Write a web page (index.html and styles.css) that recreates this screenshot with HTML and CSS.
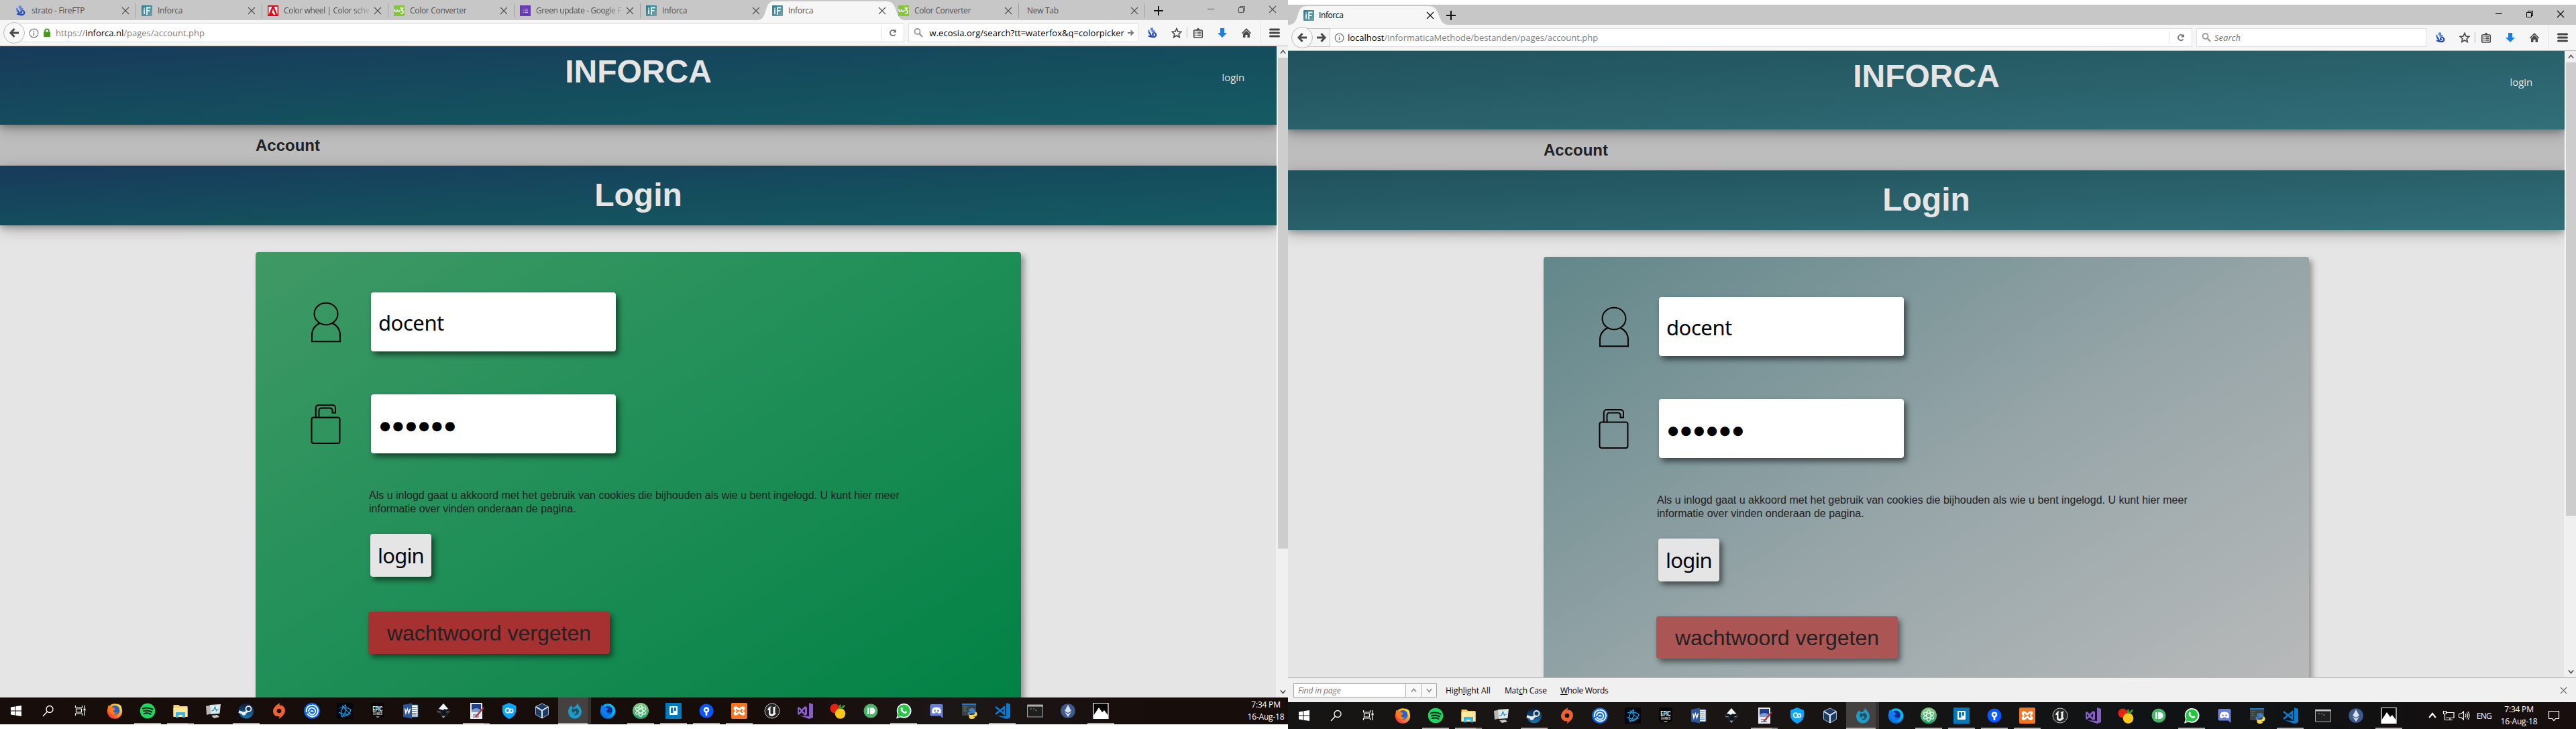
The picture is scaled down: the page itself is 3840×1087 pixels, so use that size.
FILE: index.html
```html
<!DOCTYPE html>
<html lang="nl">
<head>
<meta charset="utf-8">
<title>Inforca</title>
<link rel="stylesheet" href="styles.css">
</head>
<body>
<svg class="defs" width="0" height="0" aria-hidden="true">
<defs>
<linearGradient id="g-ff" x1="1" y1="0" x2="0" y2="1"><stop offset="0" stop-color="#fff44f"/><stop offset=".45" stop-color="#ff9a1f"/><stop offset="1" stop-color="#e8134f"/></linearGradient>
<linearGradient id="g-steam" x1="0" y1="0" x2="0" y2="1"><stop offset="0" stop-color="#0b1a3a"/><stop offset="1" stop-color="#1b75ae"/></linearGradient>
<linearGradient id="g-wf" x1="1" y1="0" x2="0" y2="1"><stop offset="0" stop-color="#00e5ff"/><stop offset="1" stop-color="#0a50d8"/></linearGradient>
<linearGradient id="g-inf" x1="0" y1="0" x2="1" y2="1"><stop offset="0" stop-color="#1f7f93"/><stop offset="1" stop-color="#7e9ea6"/></linearGradient>
<linearGradient id="g-atom" x1="0" y1="0" x2="0" y2="1"><stop offset="0" stop-color="#8fce8a"/><stop offset="1" stop-color="#1fa06a"/></linearGradient>
</defs>
<symbol id="close" viewBox="0 0 12 12"><path d="M1 1l10 10M11 1L1 11" fill="none" stroke="currentColor" stroke-width="1.1"/></symbol>
<symbol id="plus" viewBox="0 0 16 16"><path d="M8 1v14M1 8h14" stroke="#111" stroke-width="2" fill="none"/></symbol>
<symbol id="min" viewBox="0 0 12 12"><path d="M1 5.500h10" stroke="currentColor" fill="none"/></symbol>
<symbol id="restore" viewBox="0 0 12 12"><path d="M1.500 3.500h7v7h-7zM3.500 3.500v-2h7v7h-2" stroke="currentColor" fill="none"/></symbol>
<symbol id="tabshape" viewBox="0 0 218 28" preserveAspectRatio="none"><path d="M0 28C9 27 10 18 13 9C15 3 18 0 25 0H191C198 0 202 3 204 9C208 18 209 27 218 28z" fill="#f6f6f6"/></symbol>
<symbol id="f-inforca" viewBox="0 0 16 16"><rect width="16" height="16" rx="1" fill="url(#g-inf)"/><path d="M4 3.500v1.500M4 6v7" stroke="#e6f2f4" stroke-width="1.800"/><path d="M8 14V3.500h5.500M8 8h4.500" fill="none" stroke="#e6f2f4" stroke-width="1.800"/></symbol>
<symbol id="f-ftp" viewBox="0 0 16 16"><circle cx="7" cy="2.500" r="2.300" fill="#5a86e0"/><path d="M3 4c-1.500 2-.5 4 1.500 4.500M6.500 5.500h5" fill="none" stroke="#4a7be0" stroke-width="2.400"/><path d="M3 8c2 1 2 5 5 6c4 1 6-2 5-4.500c-1-2-4.500-2-5 0c-.3 1.500 1 2 2 1.500M2 12.500l5 1.500" fill="none" stroke="#2549b4" stroke-width="2.200"/></symbol>
<symbol id="f-adobe" viewBox="0 0 16 16"><rect width="16" height="16" fill="#e1081c"/><path d="M6.500 2L1.500 14V2zM9.500 2h5v12zM8 5.500L11.500 14H9l-1-2.500H6z" fill="#fff"/></symbol>
<symbol id="f-w3" viewBox="0 0 16 16"><rect width="16" height="16" fill="#87c540"/><path d="M1 6q0 3 2 3t2-3q0 3 2 3t2-2M9.500 4h4l-2 3q3 .3 2.500 3t-4 2" fill="none" stroke="#fff" stroke-width="1.500"/></symbol>
<symbol id="f-forms" viewBox="0 0 16 16"><rect width="16" height="16" fill="#673ab7"/><path d="M7 5.500h5M7 8h5M7 10.500h5M4.500 5.500h1M4.500 8h1M4.500 10.500h1" stroke="#d8cbee"/></symbol>
<symbol id="arrow" viewBox="0 0 16 16"><path d="M8.500 2L3 8l5.500 6M3.500 8H15" fill="none" stroke="#4a4a4a" stroke-width="3"/></symbol>
<symbol id="info" viewBox="0 0 16 16"><circle cx="8" cy="8" r="6.800" fill="none" stroke="#777" stroke-width="1.200"/><path d="M8 7v4.500M8 4v1.600" stroke="#666" stroke-width="1.500"/></symbol>
<symbol id="padlock" viewBox="0 0 10 14"><rect y="5.500" width="10" height="7.500" rx="1" fill="#4a9a22"/><path d="M2 7V4.500a3 3 0 0 1 6 0V7" fill="none" stroke="#4a9a22" stroke-width="1.800"/></symbol>
<symbol id="reload" viewBox="0 0 12 12"><path d="M9.500 8.500A4.200 4.200 0 1 1 9 3" fill="none" stroke="#777" stroke-width="1.800"/><path d="M11 .5v5H6z" fill="#777"/></symbol>
<symbol id="glass" viewBox="0 0 14 14"><circle cx="5.500" cy="5" r="4" fill="none" stroke="#999" stroke-width="1.800"/><path d="M8.500 8l4.500 5" stroke="#999" stroke-width="2.400"/></symbol>
<symbol id="go" viewBox="0 0 12 12"><path d="M1 6h8M6 2l4 4-4 4" fill="none" stroke="#777" stroke-width="2"/></symbol>
<symbol id="star" viewBox="0 0 16 16"><path d="M8 1.500l2 4.500 4.700.5-3.500 3.200 1 4.800L8 12l-4.200 2.500 1-4.800L1.300 6.500 6 6z" fill="none" stroke="#4a4a4a" stroke-width="1.700"/></symbol>
<symbol id="clip" viewBox="0 0 16 16"><rect x="1.800" y="4" width="12.400" height="11" rx="1" fill="none" stroke="#4a4a4a" stroke-width="1.700"/><path d="M4 4l2-1.500L8 .5l2 2L12 4z" fill="#4a4a4a"/><path d="M4 7h1.500M7 7h5M4 9.500h1.500M7 9.500h5M4 12h1.500M7 12h5" stroke="#4a4a4a" stroke-width="1.300"/></symbol>
<symbol id="down" viewBox="0 0 16 16"><path d="M5 1h6v7h4l-7 7-7-7h4z" fill="#1a7fe6"/></symbol>
<symbol id="home" viewBox="0 0 16 16"><path d="M8 1L.7 8.500l1.300 1L8 3.500l6 6 1.300-1z" fill="#4a4a4a"/><path d="M3 9.500l5-5 5 5V15H9.500v-4h-3v4H3z" fill="#4a4a4a"/></symbol>
<symbol id="menu" viewBox="0 0 16 14"><path d="M1.500 2h13M1.500 7h13M1.500 12h13" stroke="#444" stroke-width="3" stroke-linecap="round"/></symbol>
<symbol id="chev-up" viewBox="0 0 10 10"><path d="M1 7.500L5 2.500l4 5" fill="none" stroke="currentColor" stroke-width="1.700"/></symbol>
<symbol id="chev-down" viewBox="0 0 10 10"><path d="M1 2.500l4 5 4-5" fill="none" stroke="currentColor" stroke-width="1.700"/></symbol>
<symbol id="user" viewBox="0 0 46 62"><g fill="none" stroke="#000" stroke-width="2"><ellipse cx="23" cy="18" rx="17.500" ry="16.200"/><path d="M13.500 32C5 36 2 43 2 50V59.300H44V50C44 43 41 36 32.500 32"/></g></symbol>
<symbol id="lock" viewBox="0 0 46 62"><g fill="none" stroke="#000" stroke-width="2"><rect x="1.500" y="20.500" width="42" height="38.500" rx="3"/><path d="M7.800 20V6a4 4 0 0 1 4-4H33a4 4 0 0 1 4 4V13.500H32.500V10a3.500 3.500 0 0 0-3.500-3.500H16a3.500 3.500 0 0 0-3.500 3.500V20"/></g></symbol>
<symbol id="t-win" viewBox="0 0 24 24"><path d="M4 6.500l6.500-1v6H4zM11.500 5.300L20 4v7.500h-8.500zM4 12.500h6.500v6L4 17.600zM11.500 12.500H20V20l-8.500-1.300z" fill="#fff"/></symbol>
<symbol id="t-search" viewBox="0 0 24 24"><circle cx="14" cy="9.500" r="5" fill="none" stroke="#fff" stroke-width="1.300"/><path d="M10.500 13L4 20" stroke="#fff" stroke-width="1.400"/></symbol>
<symbol id="t-view" viewBox="0 0 24 24"><path d="M4.500 4v3h10V4M4.500 19v-3h10v3M5.500 9h8v5h-8zM18 4v4M18 12v7" fill="none" stroke="#fff" stroke-width="1.200"/><path d="M16.500 8.500h3v3h-3z" fill="#fff"/></symbol>
<symbol id="t-ff" viewBox="0 0 24 24"><circle cx="12" cy="12.500" r="11.200" fill="url(#g-ff)"/><circle cx="12.500" cy="11" r="7" fill="#2463d4"/><path d="M2 4c3 1 5 2 8 3c2 1 3 2 3 3c-2 0-3 1-3 3c2 3 5 2 6 0c-1 6-9 6-12 1C2 11 1.500 8 2 4z" fill="#ff7a1a"/><path d="M15 0c3 2 5 6 4.500 11c3-2 3-5 1.500-7z" fill="#ffe23b"/></symbol>
<symbol id="t-spot" viewBox="0 0 24 24"><circle cx="12" cy="12" r="11.300" fill="#1ed760"/><path d="M5 8.500q8-2.500 14.500 1.200M6 12.300q7-2 12 1.200M6.800 16q5.500-1.500 9.700.9" fill="none" stroke="#14241a" stroke-width="2.200" stroke-linecap="round"/></symbol>
<symbol id="t-files" viewBox="0 0 24 24"><path d="M1.500 3h8l1.500 2h11.500v16h-21z" fill="#f3cf6b"/><path d="M1.500 7h21v13.500h-21z" fill="#ffe9a0"/><path d="M5 14h14v8h-4v-4H9v4H5z" fill="#3cb4e8"/></symbol>
<symbol id="t-mon" viewBox="0 0 24 24"><path d="M1 5l9-2v13l-8 2z" fill="#b9b9b4"/><path d="M7 3l16-1-1.500 14L8 17z" fill="#dfe0dc"/><path d="M9 5l12-.7-1 10L10 15z" fill="#d8f0fa"/><path d="M9.500 12l3-1 2-5 2 6 1-2h2.500" fill="none" stroke="#2a86b8" stroke-width="1.200"/><path d="M9 19l9-1 3 3-8 2z" fill="#c9c9c4"/></symbol>
<symbol id="t-steam" viewBox="0 0 24 24"><circle cx="12" cy="12" r="11.200" fill="url(#g-steam)"/><circle cx="15.500" cy="9" r="4" fill="none" stroke="#e8eef4" stroke-width="1.800"/><path d="M1 13l8 3 5-4" fill="none" stroke="#e8eef4" stroke-width="3.500"/><circle cx="8.500" cy="16" r="2.800" fill="#e8eef4"/></symbol>
<symbol id="t-origin" viewBox="0 0 24 24"><path d="M14 0c-1 1.500-1.500 2-1.500 3.500C18 3.500 21 7 21 11.500c0 5-4 9-9.500 12.500c1-1.500 1-2.500 1-3.500C6 20.500 3 17 3 12.500C3 8 7 3 14 0z" fill="#ed6233"/><circle cx="12" cy="12" r="3.300" fill="#1a0e0b"/></symbol>
<symbol id="t-uplay" viewBox="0 0 24 24"><circle cx="12" cy="12" r="11.800" fill="#0c6cf2"/><path d="M4 14C2.500 7 8 3.500 12 3.500a8.500 8.500 0 1 1-7 12.500M7 13c0-4 3-6 5.500-5.500a5 5 0 1 1-5 6.500M10.500 13.500c0-2 3-2 3.200 0" fill="none" stroke="#fff" stroke-width="1.900"/></symbol>
<symbol id="t-bnet" viewBox="0 0 24 24"><rect width="24" height="24" rx="1.500" fill="#02060c"/><g fill="none" stroke="#159fe8" stroke-width="1.300"><path d="M8 4q4 6 12 12q-9 3-17-2"/><path d="M4 8q9-3 17 2q-2 9-11 10"/><path d="M13 3q3 9-5 18q-5-9 5-18z"/></g></symbol>
<symbol id="t-epic" viewBox="0 0 24 24"><path d="M2 0h20v20l-10 4L2 20z" fill="#050505"/><text x="12" y="12.500" text-anchor="middle" textLength="15" lengthAdjust="spacingAndGlyphs" class="epic-a">EPIC</text><text x="12" y="18" text-anchor="middle" textLength="14" lengthAdjust="spacingAndGlyphs" class="epic-b">GAMES</text><path d="M8.500 20.500h7L12 22z" fill="#ddd"/></symbol>
<symbol id="t-word" viewBox="0 0 24 24"><path d="M11 3h12v18H11z" fill="#fff" stroke="#2b579a"/><path d="M14 6.500h7M14 9.500h7M14 12.500h7M14 15.500h7M14 18h7" stroke="#2b579a" stroke-width="1.200"/><path d="M1 3l13-2.500v23L1 21z" fill="#2b579a"/><path d="M3.500 8.500l1.500 7 2.300-6.500 2.200 6.500 2-7" fill="none" stroke="#fff" stroke-width="1.500"/></symbol>
<symbol id="t-ink" viewBox="0 0 24 24"><path d="M12 1l10 11c0 2-2 3-5 3c2 1 3 2 0 3l-5 4-4-4c2-1 1-2-1-3c-3 0-5-1-5-3z" fill="#11151c" stroke="#4a5260" stroke-width=".6"/><path d="M12 1l7 8-3 1-2-1-3 2-2-1-4-1z" fill="#f2f5f8"/><path d="M10 20h4l-2 2.500zM3 13l5 1M16 14l4-1" stroke="#8a96a6" fill="#8a96a6"/></symbol>
<symbol id="t-paint" viewBox="0 0 24 24"><path d="M3 0h18v24H3z" fill="#e8ecf0"/><path d="M5 2h14v12H5z" fill="#1f3f8c"/><path d="M5 11q7-6 14 0v3H5z" fill="#7f9ed0"/><path d="M7 18h9M7 21h9" stroke="#2b4fa0"/><path d="M23 7L11 21" stroke="#c82b2b" stroke-width="2.200"/></symbol>
<symbol id="t-shield" viewBox="0 0 24 24"><path d="M12 0l10 4v9q-1 7-10 11Q3 20 2 13V4z" fill="#0aa5ff"/><circle cx="9.800" cy="11.500" r="3.300" fill="none" stroke="#fff" stroke-width="1.700"/><circle cx="15" cy="12" r="2.600" fill="none" stroke="#fff" stroke-width="1.700"/></symbol>
<symbol id="t-vbox" viewBox="0 0 24 24"><path d="M12 1l9.500 4.500v12L12 23l-9.500-5.500v-12z" fill="#1c3a66" stroke="#a8b8cc" stroke-width="1"/><path d="M12 11.500V23M12 11.500L3 6M12 11.500L21 6" stroke="#e5ecf5" stroke-width="2"/></symbol>
<symbol id="t-water" viewBox="0 0 24 24"><path d="M16 0c0 4 6 7 6 13a10 10 0 0 1-20 1C2 9 4 6 7 4c1 3 2 3 3 3c3-1 5-4 6-7z" fill="#1f9bc8"/><path d="M8 8q3 2 6 0c4 1 5 5 3 8s-6 3-7 1c3 0 5-2 4-4c-2-1-3 0-4 2c-3-1-3-4-2-7z" fill="#24505f"/></symbol>
<symbol id="t-ffdev" viewBox="0 0 24 24"><circle cx="12" cy="12.500" r="11.200" fill="url(#g-wf)"/><circle cx="12.500" cy="11" r="6.500" fill="#0b2a8c"/><path d="M2 4c3 1 5 2 8 3c2 1 3 2 3 3c-2 0-3 1-3 3c2 3 5 2 6 0c-1 6-9 6-12 1C2 11 1.500 8 2 4z" fill="#0f7df5"/></symbol>
<symbol id="t-atom" viewBox="0 0 24 24"><circle cx="12" cy="12" r="12" fill="url(#g-atom)"/><g fill="none" stroke="#e9f8ec" stroke-width="1.100"><ellipse cx="12" cy="12" rx="3" ry="8.500"/><ellipse cx="12" cy="12" rx="3" ry="8.500" transform="rotate(60 12 12)"/><ellipse cx="12" cy="12" rx="3" ry="8.500" transform="rotate(120 12 12)"/></g></symbol>
<symbol id="t-trello" viewBox="0 0 24 24"><path d="M0 0h24v24H0z" fill="#0079bf"/><rect x="6" y="5" width="12" height="13" rx="1" fill="#fff"/><path d="M8 7h3.500v8H8zM13 7h3v5h-3z" fill="#0079bf"/></symbol>
<symbol id="t-tree" viewBox="0 0 24 24"><circle cx="12" cy="12" r="10.500" fill="#0a57ff"/><circle cx="12" cy="10.500" r="4.300" fill="#fff"/><circle cx="12" cy="10.500" r="1.700" fill="#0a57ff"/><path d="M12 14v5" stroke="#fff" stroke-width="2.600"/></symbol>
<symbol id="t-xampp" viewBox="0 0 24 24"><rect width="24" height="24" rx="2" fill="#f37623"/><path d="M4.500 6c3-2 5 0 7.500 2.500C14.500 6 17 4 19.500 6c2 3 0 5-2 6c2 1 4 3 2 6c-2.500 2-5 0-7.500-2.500C9.500 18 7 20 4.500 18c-2-3 0-5 2-6c-2-1-4-3-2-6z" fill="#fff"/><path d="M8 9q0 3 3.500 3Q8 12 8 15M16 9q0 3-3.500 3q3.500 0 3.500 3" fill="none" stroke="#f37623" stroke-width="2"/></symbol>
<symbol id="t-unreal" viewBox="0 0 24 24"><circle cx="12" cy="12" r="11" fill="#262626" stroke="#c4c4c4"/><path d="M5 11q1-5 6-6q-2 2-1.500 4v7l2 1 2-1V8l-1-1q3-1 5-2q-1 2-1 4v6l1.500 1q-3 3-6 4q-4 0-5-3v-6q-1 0-2 0z" fill="#f0f0f0"/></symbol>
<symbol id="t-vs" viewBox="0 0 24 24"><path d="M18 0l6 2v20l-6 2-14-5 14 1z" fill="#865fc5"/><path d="M1 7l2-1 4 3.500L12 5l3 1.500v11L12 19l-5-4.500L3 18l-2-1zM3 9.500v5L5.500 12zM12 9l-3.500 3 3.500 3z" fill="#865fc5" fill-rule="evenodd"/></symbol>
<symbol id="t-fruit" viewBox="0 0 24 24"><circle cx="7.500" cy="8.500" r="7" fill="#e32414"/><circle cx="15.500" cy="16" r="7.800" fill="#fdc81a"/><path d="M14 9q-1-6 2-7q1 3 1 5q2-4 6-4q-1 5-6 6z" fill="#2aa32a"/></symbol>
<symbol id="t-push" viewBox="0 0 24 24"><circle cx="12" cy="12" r="10.500" fill="#4cb36b"/><rect x="7" y="7" width="2.600" height="10" rx=".8" fill="#fff"/><path d="M11 7h2.500a5 5 0 0 1 0 10H11z" fill="#fff"/></symbol>
<symbol id="t-wa" viewBox="0 0 24 24"><path d="M1 23.500l2-6.500A10.900 10.900 0 1 1 7.500 21.500z" fill="#fff"/><circle cx="12.300" cy="11.700" r="9.200" fill="#25c544"/><path d="M2.800 21.800L5 15l4 4z" fill="#25c544"/><path d="M8.500 7q1.500-1.500 2.500 1.500q-1 1.500-.5 2q1 2 3 3l1.500-1.300q3 .8 2 2.300q-2 2.500-5.500 0.500t-4-5q0-2 1-3z" fill="#fff"/></symbol>
<symbol id="t-discord" viewBox="0 0 24 24"><path d="M4.500 2h15a2 2 0 0 1 2 2v19l-4-3.500h-13a2 2 0 0 1-2-2V4a2 2 0 0 1 2-2z" fill="#6a7fd6"/><path d="M7 7.500q5-2 10 0q2.500 4 2 7q-2 1.500-4 1.500l-1-1.500h-4L9 16q-2 0-4-1.500q-.5-3 2-7z" fill="#fff"/><circle cx="9.500" cy="11.800" r="1.400" fill="#6a7fd6"/><circle cx="14.500" cy="11.800" r="1.400" fill="#6a7fd6"/></symbol>
<symbol id="t-py" viewBox="0 0 24 24"><path d="M1 1h21v18H1z" fill="#3b4144"/><path d="M1 1h21v2H1z" fill="#1e7fd0"/><path d="M3 6h6M3 9h4M3 12h5" stroke="#5b8a5b"/><path d="M11 12q0-4 5-4t4.500 4v3.500h-6q-2 .5-2 3h-2q-2.500-4 .5-5h5" fill="#3f7fc0"/><path d="M21 13q3 1 2.500 4.500t-4 3h-2l3 1q-1 2.500-5 2.500t-4-3v-3h6q3-.5 3.500-5z" fill="#ffd84a"/></symbol>
<symbol id="t-code" viewBox="0 0 24 24"><path d="M18 0l6 2v20l-6 2-14-5 14 1z" fill="#0b7bd0"/><path d="M2 6l13 10.500V6.500L2 17" fill="none" stroke="#0b7bd0" stroke-width="2.600"/></symbol>
<symbol id="t-cmd" viewBox="0 0 24 24"><path d="M.5 3h23v18H.5z" fill="#1f1f1f" stroke="#a8a8a8"/><path d="M1 3.500h22v2H1z" fill="#c8c8c8"/><path d="M4 9h3M9 9h2M12 11h3" stroke="#888"/></symbol>
<symbol id="t-eth" viewBox="0 0 24 24"><circle cx="12" cy="12" r="10.800" fill="#3d5a8a"/><path d="M12 3l5 9-5 3-5-3z" fill="#d8e2f0"/><path d="M12 16.500l5-3-5 7.500-5-7.500z" fill="#d8e2f0"/></symbol>
<symbol id="t-pic" viewBox="0 0 24 24"><path d="M1 .5h22v23H1z" fill="#050505" stroke="#fff" stroke-width="1.200"/><path d="M1 19l8-12 5 7 3-3 6 8v4.500H1z" fill="#fff"/></symbol>
<symbol id="net" viewBox="0 0 18 18"><path d="M5 4.500h12v8H5M11 12.500v3M7 15.500h8M1.500 2.500h4v4h-4zM3.500 6.500v9h3" fill="none" stroke="#fff" stroke-width="1.200"/></symbol>
<symbol id="vol" viewBox="0 0 18 18"><path d="M1.500 6.500h3l4-3.500v12l-4-3.500h-3zM11 6.500q2 2.500 0 5M13 4.500q3.500 4.500 0 9M15 3q4 6 0 12" fill="none" stroke="#fff" stroke-width="1.100"/></symbol>
<symbol id="note" viewBox="0 0 18 18"><path d="M1.500 2.500h15v11h-5l-2.500 3-2.500-3h-5z" fill="none" stroke="#fff" stroke-width="1.200"/></symbol>
</svg>

<section class="window online">
  <div class="tabbar">
    <div class="tab"><svg class="fav"><use href="#f-ftp"/></svg><span class="title">strato - FireFTP</span><svg class="x"><use href="#close"/></svg></div>
    <div class="tab"><svg class="fav"><use href="#f-inforca"/></svg><span class="title">Inforca</span><svg class="x"><use href="#close"/></svg></div>
    <div class="tab"><svg class="fav"><use href="#f-adobe"/></svg><span class="title fade">Color wheel | Color sche</span><svg class="x"><use href="#close"/></svg></div>
    <div class="tab"><svg class="fav"><use href="#f-w3"/></svg><span class="title">Color Converter</span><svg class="x"><use href="#close"/></svg></div>
    <div class="tab"><svg class="fav"><use href="#f-forms"/></svg><span class="title fade">Green update - Google F</span><svg class="x"><use href="#close"/></svg></div>
    <div class="tab last"><svg class="fav"><use href="#f-inforca"/></svg><span class="title">Inforca</span><svg class="x"><use href="#close"/></svg></div>
    <div class="tab active"><svg class="shape"><use href="#tabshape"/></svg><svg class="fav"><use href="#f-inforca"/></svg><span class="title">Inforca</span><svg class="x"><use href="#close"/></svg></div>
    <div class="tab"><svg class="fav"><use href="#f-w3"/></svg><span class="title">Color Converter</span><svg class="x"><use href="#close"/></svg></div>
    <div class="tab blank"><span class="title">New Tab</span><svg class="x"><use href="#close"/></svg></div>
    <svg class="plus"><use href="#plus"/></svg>
    <div class="controls"><svg><use href="#min"/></svg><svg><use href="#restore"/></svg><svg><use href="#close"/></svg></div>
  </div>
  <div class="toolbar">
    <div class="back"><svg><use href="#arrow"/></svg></div>
    <div class="url"><svg class="info"><use href="#info"/></svg><svg class="padlock"><use href="#padlock"/></svg><span class="address">https://<b>inforca.nl</b>/pages/account.php</span><span class="reload"><svg><use href="#reload"/></svg></span></div>
    <div class="search"><svg class="glass"><use href="#glass"/></svg><span class="query"><span>w.ecosia.org/search?tt=waterfox&amp;q=colorpicker</span></span><svg class="go"><use href="#go"/></svg></div>
    <div class="tools"><svg><use href="#f-ftp"/></svg><svg><use href="#star"/></svg><i></i><svg><use href="#clip"/></svg><svg><use href="#down"/></svg><svg><use href="#home"/></svg><i class="pale"></i><svg><use href="#menu"/></svg></div>
  </div>
  <div class="viewport">
    <main class="page">
      <header class="masthead"><h1>INFORCA</h1><a class="loginlink">login</a></header>
      <nav class="crumbs">Account</nav>
      <h2 class="heading">Login</h2>
      <form class="card">
        <div class="row"><svg><use href="#user"/></svg><div class="field">docent</div></div>
        <div class="row"><svg><use href="#lock"/></svg><div class="field dots">●●●●●●</div></div>
        <p>Als u inlogd gaat u akkoord met het gebruik van cookies die bijhouden als wie u bent ingelogd. U kunt hier meer<br>informatie over vinden onderaan de pagina.</p>
        <button type="button" class="submit">login</button>
        <a class="forgot">wachtwoord vergeten</a>
      </form>
    </main>
    <div class="scrollbar"><svg><use href="#chev-up"/></svg><div class="thumb"></div><svg><use href="#chev-down"/></svg></div>
  </div>
  <div class="taskbar">
    <ul class="sys"><li><svg><use href="#t-win"/></svg></li><li><svg><use href="#t-search"/></svg></li><li><svg><use href="#t-view"/></svg></li></ul>
    <ul class="apps">
      <li><svg><use href="#t-ff"/></svg></li><li class="run"><svg><use href="#t-spot"/></svg></li><li class="run multi"><svg><use href="#t-files"/></svg></li><li><svg><use href="#t-mon"/></svg></li><li class="run"><svg><use href="#t-steam"/></svg></li><li><svg><use href="#t-origin"/></svg></li><li><svg><use href="#t-uplay"/></svg></li><li><svg><use href="#t-bnet"/></svg></li><li><svg><use href="#t-epic"/></svg></li><li><svg><use href="#t-word"/></svg></li><li><svg><use href="#t-ink"/></svg></li><li class="run multi"><svg><use href="#t-paint"/></svg></li><li><svg><use href="#t-shield"/></svg></li><li><svg><use href="#t-vbox"/></svg></li><li class="current"><svg><use href="#t-water"/></svg></li><li><svg><use href="#t-ffdev"/></svg></li><li class="run"><svg><use href="#t-atom"/></svg></li><li class="run"><svg><use href="#t-trello"/></svg></li><li class="run"><svg><use href="#t-tree"/></svg></li><li class="run"><svg><use href="#t-xampp"/></svg></li><li><svg><use href="#t-unreal"/></svg></li><li><svg><use href="#t-vs"/></svg></li><li><svg><use href="#t-fruit"/></svg></li><li><svg><use href="#t-push"/></svg></li><li class="run"><svg><use href="#t-wa"/></svg></li><li><svg><use href="#t-discord"/></svg></li><li><svg><use href="#t-py"/></svg></li><li class="run"><svg><use href="#t-code"/></svg></li><li><svg><use href="#t-cmd"/></svg></li><li><svg><use href="#t-eth"/></svg></li><li class="run"><svg><use href="#t-pic"/></svg></li>
    </ul>
    <div class="clock"><span>7:34 PM</span><span>16-Aug-18</span></div>
  </div>
</section>

<section class="window local">
  <div class="tabbar">
    <div class="tab active"><svg class="shape"><use href="#tabshape"/></svg><svg class="fav"><use href="#f-inforca"/></svg><span class="title">Inforca</span><svg class="x"><use href="#close"/></svg></div>
    <svg class="plus"><use href="#plus"/></svg>
    <div class="controls"><svg><use href="#min"/></svg><svg><use href="#restore"/></svg><svg><use href="#close"/></svg></div>
  </div>
  <div class="toolbar">
    <div class="back"><svg><use href="#arrow"/></svg></div>
    <div class="url"><span class="forward"><svg><use href="#arrow"/></svg></span><svg class="info"><use href="#info"/></svg><span class="address"><b>localhost</b>/informaticaMethode/bestanden/pages/account.php</span><span class="reload"><svg><use href="#reload"/></svg></span></div>
    <div class="search"><svg class="glass"><use href="#glass"/></svg><em>Search</em></div>
    <div class="tools"><svg><use href="#f-ftp"/></svg><svg><use href="#star"/></svg><i></i><svg><use href="#clip"/></svg><svg><use href="#down"/></svg><svg><use href="#home"/></svg><i class="pale"></i><svg><use href="#menu"/></svg></div>
  </div>
  <div class="viewport">
    <main class="page">
      <header class="masthead"><h1>INFORCA</h1><a class="loginlink">login</a></header>
      <nav class="crumbs">Account</nav>
      <h2 class="heading">Login</h2>
      <form class="card">
        <div class="row"><svg><use href="#user"/></svg><div class="field">docent</div></div>
        <div class="row"><svg><use href="#lock"/></svg><div class="field dots">●●●●●●</div></div>
        <p>Als u inlogd gaat u akkoord met het gebruik van cookies die bijhouden als wie u bent ingelogd. U kunt hier meer<br>informatie over vinden onderaan de pagina.</p>
        <button type="button" class="submit">login</button>
        <a class="forgot">wachtwoord vergeten</a>
      </form>
    </main>
    <div class="scrollbar"><svg><use href="#chev-up"/></svg><div class="thumb"></div><svg><use href="#chev-down"/></svg></div>
  </div>
  <div class="findbar">
    <div class="find"><em>Find in page</em><span><svg><use href="#chev-up"/></svg></span><span><svg><use href="#chev-down"/></svg></span></div>
    <span class="opt o1">High<u>l</u>ight All</span><span class="opt o2">Mat<u>c</u>h Case</span><span class="opt o3"><u>W</u>hole Words</span>
    <svg class="x"><use href="#close"/></svg>
  </div>
  <div class="taskbar">
    <ul class="sys"><li><svg><use href="#t-win"/></svg></li><li><svg><use href="#t-search"/></svg></li><li><svg><use href="#t-view"/></svg></li></ul>
    <ul class="apps">
      <li><svg><use href="#t-ff"/></svg></li><li class="run"><svg><use href="#t-spot"/></svg></li><li class="run multi"><svg><use href="#t-files"/></svg></li><li><svg><use href="#t-mon"/></svg></li><li class="run"><svg><use href="#t-steam"/></svg></li><li><svg><use href="#t-origin"/></svg></li><li><svg><use href="#t-uplay"/></svg></li><li><svg><use href="#t-bnet"/></svg></li><li><svg><use href="#t-epic"/></svg></li><li><svg><use href="#t-word"/></svg></li><li><svg><use href="#t-ink"/></svg></li><li class="run multi"><svg><use href="#t-paint"/></svg></li><li><svg><use href="#t-shield"/></svg></li><li><svg><use href="#t-vbox"/></svg></li><li class="current"><svg><use href="#t-water"/></svg></li><li><svg><use href="#t-ffdev"/></svg></li><li class="run"><svg><use href="#t-atom"/></svg></li><li class="run"><svg><use href="#t-trello"/></svg></li><li class="run"><svg><use href="#t-tree"/></svg></li><li class="run"><svg><use href="#t-xampp"/></svg></li><li><svg><use href="#t-unreal"/></svg></li><li><svg><use href="#t-vs"/></svg></li><li><svg><use href="#t-fruit"/></svg></li><li><svg><use href="#t-push"/></svg></li><li class="run"><svg><use href="#t-wa"/></svg></li><li><svg><use href="#t-discord"/></svg></li><li><svg><use href="#t-py"/></svg></li><li class="run"><svg><use href="#t-code"/></svg></li><li><svg><use href="#t-cmd"/></svg></li><li><svg><use href="#t-eth"/></svg></li><li class="run"><svg><use href="#t-pic"/></svg></li>
    </ul>
    <div class="tray"><svg class="up"><use href="#chev-up"/></svg><svg><use href="#net"/></svg><svg><use href="#vol"/></svg><span>ENG</span></div>
    <div class="clock"><span>7:34 PM</span><span>16-Aug-18</span></div>
    <svg class="note"><use href="#note"/></svg>
  </div>
</section>
</body>
</html>
```
FILE: styles.css
```css
* { box-sizing: border-box; }
body { margin: 0; display: flex; width: 3840px; height: 1087px; overflow: hidden; background: #fff; font: 12px "Open Sans", "Noto Sans", sans-serif; }
ul { list-style: none; margin: 0; padding: 0; display: flex; }
svg { display: block; flex: none; }
.defs { position: absolute; }
.epic-a { font: bold 11px "Liberation Sans", sans-serif; fill: #fff; }
.epic-b { font: bold 4.500px "Liberation Sans", sans-serif; fill: #ddd; }

.window { display: flex; flex-direction: column; width: 1920px; height: 1080px; flex: none; overflow: hidden; }
.local { margin-top: 7px; }

/* tab strip */
.tabbar { display: flex; align-items: center; height: 30px; flex: none; background: #c7c7c7; padding-left: 15px; color: #505050; }
.tab { position: relative; display: flex; align-items: center; width: 188px; height: 22px; padding-left: 8px; border-right: 1px solid #a3a3a3; margin-top: 2px; }
.tab.last, .tab.active { border-right-color: transparent; }
.tab > * { position: relative; }
.tab .shape { position: absolute; left: -13px; top: -3px; width: 218px; height: 28px; }
.fav { width: 16px; height: 16px; }
.title { width: 132px; margin-left: 8px; letter-spacing: -.3px; white-space: nowrap; line-height: 20px; }
.fade { letter-spacing: -.4px; -webkit-mask-image: linear-gradient(90deg, #000 80%, transparent); mask-image: linear-gradient(90deg, #000 80%, transparent); }
.tab.blank { padding-left: 12px; }
.blank .title { width: 152px; margin-left: 0; }
.tab .x { width: 12px; height: 12px; margin-left: 2px; }
.plus { width: 16px; height: 16px; margin: 2px 0 0 12px; }
.controls { display: flex; gap: 34px; margin: -2px 17px 0 auto; }
.controls svg { width: 12px; height: 12px; }
.local .tabbar { color: #000; }
.local .tab { width: 220px; }
.local .tab .shape { width: 236px; }
.local .title { width: 158px; margin-left: 7px; letter-spacing: -.4px; }
.local .plus { margin-left: 0; }

/* navigation toolbar */
.toolbar { display: flex; align-items: center; height: 39px; flex: none; background: #f6f6f6; border-bottom: 1px solid #b6b6b6; padding-left: 5px; font-size: 13px; }
.back { position: relative; z-index: 1; width: 32px; height: 32px; border: 1px solid #bcbcbc; border-radius: 50%; background: #f8f8f8; display: grid; place-items: center; }
.back svg, .forward svg { width: 16px; height: 16px; }
.url { display: flex; align-items: center; width: 1318px; height: 28px; margin-left: -7px; padding-left: 12px; background: #fff; border: 1px solid #dedede; }
.info { width: 15px; height: 15px; }
.padlock { width: 10px; height: 14px; margin-left: 7px; }
.address { margin-left: 8px; color: #808080; white-space: nowrap; }
.address b { font-weight: 400; color: #000; }
.reload { display: grid; place-items: center; width: 34px; height: 18px; margin-left: auto; border-left: 1px solid #ddd; }
.reload svg { width: 12px; height: 12px; }
.forward { display: grid; place-items: center; width: 34px; height: 28px; margin: 0 6px 0 -13px; padding-left: 8px; background: #f6f6f6; border: 1px solid #c4c4c4; }
.forward svg { transform: scaleX(-1); }
.local .url { padding-left: 11px; }
.local .address { margin-left: 5px; }
.search { display: flex; align-items: center; width: 343px; height: 28px; margin-left: 6px; padding: 0 4px 0 7px; background: #fff; border: 1px solid #dedede; }
.glass { width: 14px; height: 14px; margin-right: 5px; }
.query { display: flex; justify-content: flex-end; width: 295px; white-space: nowrap; letter-spacing: .05px; }
.go { width: 11px; height: 12px; margin-left: 4px; }
.search em { color: #757575; }
.tools { display: flex; align-items: center; height: 38px; margin-left: 13px; }
.tools svg { width: 16px; height: 16px; margin-right: 20px; }
.tools svg:nth-of-type(2) { margin-right: 7px; }
.tools svg:nth-of-type(5) { margin-right: 12px; }
.tools i { width: 1px; height: 16px; background: #b5b5b5; margin-right: 8px; }
.tools i.pale { height: 36px; background: #e2e2e2; margin-right: 13px; }
.tools svg:last-child { height: 14px; margin-right: 0; }

/* page */
.viewport { display: flex; flex: 1; min-height: 0; overflow: hidden; }
.page { width: 1903px; height: 100%; overflow: hidden; background: #e5e5e5; font-family: "Liberation Sans", Arial, sans-serif; color: #222; }
.masthead, .heading { position: relative; color: #e5e5e5; background: linear-gradient(to bottom right, #183a5b, #14505e 60%, #155b63); box-shadow: 0 4px 8px 0 rgba(0,0,0,.2), 0 6px 20px 0 rgba(0,0,0,.26); }
.local .masthead, .local .heading { background: linear-gradient(to bottom right, #20525c, #326f79); }
.masthead { height: 117px; display: grid; grid-template-columns: 1fr auto 1fr; padding-right: 48px; }
.masthead h1 { grid-column: 2; margin: 10px -48px 0 0; font-size: 48px; line-height: 56px; }
.loginlink { grid-column: 3; justify-self: end; margin-top: 35px; font: 15px/22px "Open Sans", sans-serif; letter-spacing: -.1px; }
.crumbs { height: 61px; padding-left: 381px; background: #bdbdbd; font-size: 24px; line-height: 61px; font-weight: 700; }
.heading { height: 89px; margin: 0; text-align: center; font-size: 48px; line-height: 88px; }
.card { width: 1141px; height: 700px; margin: 40px 0 0 381px; padding: 60px 0 0 169px; border-radius: 4px; background: linear-gradient(to bottom right, #409965, #24905a 40%, #008144); box-shadow: 5px 5px 8px rgba(0,0,0,.35); }
.local .card { background: linear-gradient(to bottom right, #62878a, #98a6a9 52%, #bcbcbc); }
.row { display: flex; align-items: center; margin: 0 0 64px -87px; }
.row svg { width: 46px; height: 62px; margin: 2px 44px 0 0; }
.field { width: 365px; height: 88px; padding-left: 11px; border-radius: 4px; background: #fff; color: #000; font: 31px/90px "Noto Sans", sans-serif; letter-spacing: -.45px; box-shadow: 4px 5px 8px rgba(0,0,0,.55); }
.dots { padding-left: 13px; font: 18.500px/94px "DejaVu Sans", sans-serif; letter-spacing: 3.200px; }
.card p { margin: -11px 0 27px; font-size: 16px; line-height: 20px; white-space: nowrap; }
.submit { display: block; width: 91px; height: 64px; margin-left: 2px; padding: 0; border: 0; border-radius: 4px; background: #e5e5e5; color: #000; font: 31px/64px "Noto Sans", sans-serif; letter-spacing: -.8px; box-shadow: 4px 5px 8px rgba(0,0,0,.55); }
.forgot { display: block; width: 360px; height: 63px; margin: 52px 0 0 -1px; border-radius: 4px; background: #a73030; font-size: 32px; line-height: 64px; text-align: center; box-shadow: 4px 5px 8px rgba(0,0,0,.5); }
.local .forgot { background: #ac5555; }

.scrollbar { display: flex; flex-direction: column; align-items: center; width: 17px; background: #f0f0f0; color: #505050; border-left: 1px solid #fff; }
.scrollbar svg { width: 9px; height: 17px; }
.scrollbar .thumb { width: 15px; height: 732px; background: #cdcdcd; margin-bottom: auto; }
.local .thumb { height: 676px; }

/* find bar */
.findbar { display: flex; align-items: center; height: 37px; flex: none; background: #f0f0f0; border-top: 1px solid #b8b8b8; padding-left: 8px; }
.find { display: flex; align-items: stretch; width: 214px; height: 21px; border: 1px solid #a0a0a0; background: #fff; }
.find em { flex: 1; padding-left: 6px; line-height: 19px; color: #777; letter-spacing: -.1px; }
.find span { display: grid; place-items: center; width: 23px; border-left: 1px solid #b0b0b0; background: #f8f8f8; color: #888; }
.find svg { width: 9px; height: 9px; }
.opt { color: #000; white-space: nowrap; }
.o1 { margin-left: 13px; width: 88px; }
.o2 { width: 83px; letter-spacing: -.2px; }
.o3 { letter-spacing: -.3px; }
.findbar .x { width: 11px; height: 11px; margin: 0 13px 0 auto; color: #555; }

/* taskbar */
.taskbar { display: flex; height: 40px; flex: none; background: linear-gradient(90deg, #170d0a, #160c0a 60%, #1c1717 75%, #170d0a 90%); color: #fff; }
.local .taskbar { background: linear-gradient(90deg, #151414, #1a1513 30%, #101315 68%, #111214 80%, #180e0d); }
.taskbar svg { width: 24px; height: 24px; }
.sys li { display: grid; place-items: center; width: 48px; height: 40px; }
.apps { margin-left: 2px; }
.apps li { display: grid; place-items: center; width: 49px; height: 40px; }
.run { background: linear-gradient(#b3aeab, #b3aeab) 5px 100% / 40px 2px no-repeat; }
.run.multi { background: linear-gradient(90deg, #b3aeab 31px, #8a8684 31px) 5px 100% / 40px 2px no-repeat; }
.apps .current { background: linear-gradient(#b3aeab, #b3aeab) 0 100% / 44px 2px no-repeat, linear-gradient(90deg, #454140 44px, #353130 44px); }
.clock { display: flex; flex-direction: column; align-items: center; justify-content: center; width: 64px; margin-left: auto; margin-right: 1px; line-height: 18px; letter-spacing: -.2px; }
.local .clock { margin: 0 3px 0 0; width: 80px; }
.tray { display: flex; align-items: center; gap: 5px; margin-left: auto; margin-right: 1px; letter-spacing: -.7px; }
.tray svg { width: 18px; height: 18px; }
.tray .up { width: 12px; height: 12px; margin-right: 4px; }
.tray span { margin-left: 5px; }
.taskbar .note { width: 18px; height: 18px; margin: 11px 24px 0 0; }
```
